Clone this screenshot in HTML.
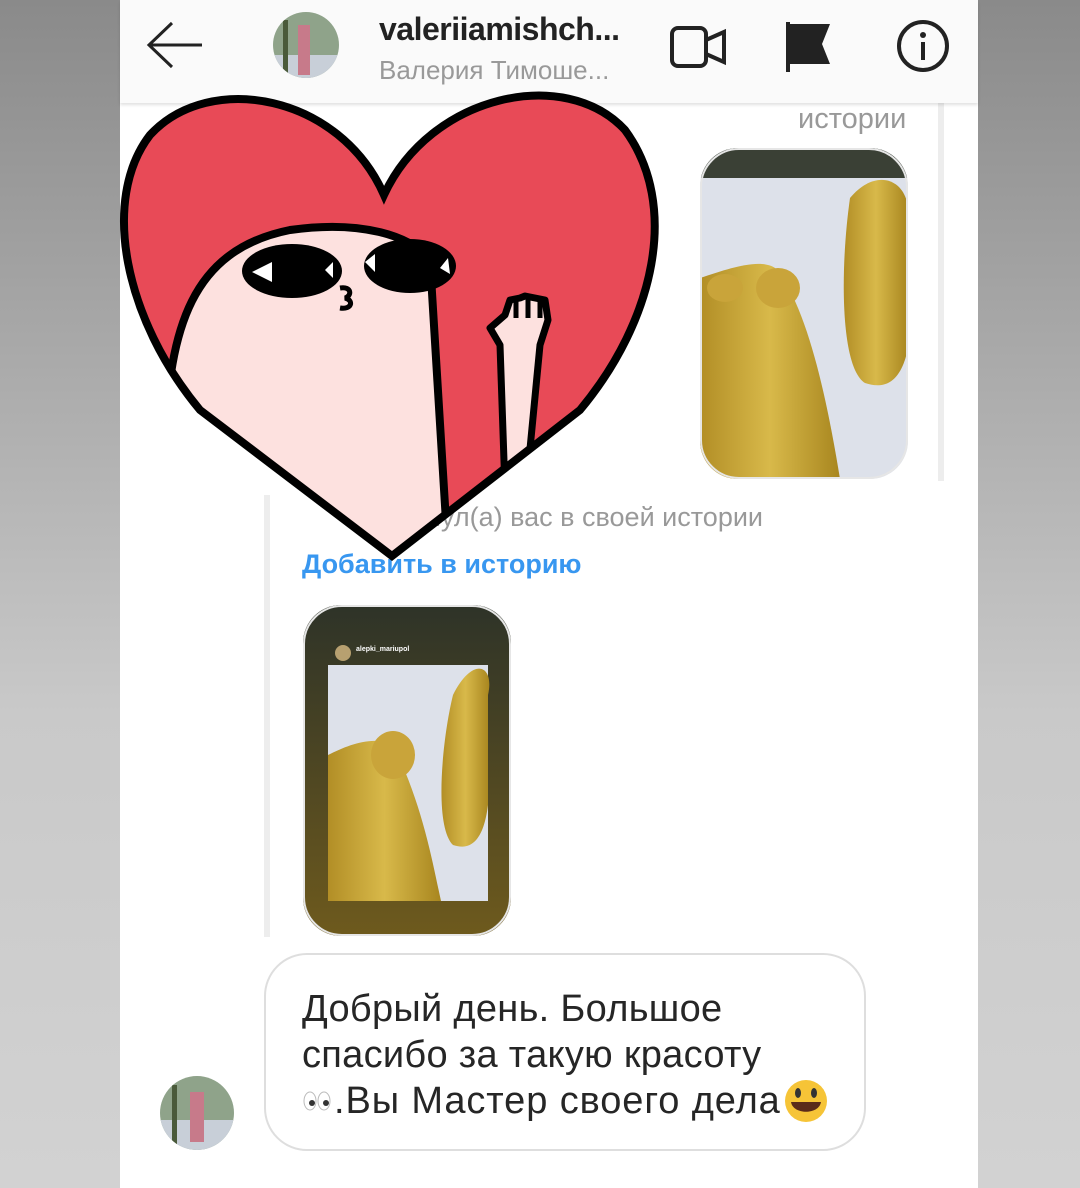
<!DOCTYPE html>
<html><head><meta charset="utf-8"><style>
*{margin:0;padding:0;box-sizing:border-box}
body{width:1080px;height:1188px;position:relative;overflow:hidden;background:linear-gradient(#8a8a8a,#c9c9c9 60%,#d2d2d2);font-family:"Liberation Sans",sans-serif}
.main{position:absolute;left:120px;top:0;width:858px;height:1188px;background:#fff}
.hdr{position:absolute;left:120px;top:0;width:858px;height:103px;background:#fafafa;box-shadow:0 2px 3px rgba(0,0,0,.12)}
.t{position:absolute;white-space:nowrap}
.vl{position:absolute;width:6px;background:#ededed}
</style></head><body>
<div class="main"></div>
<div class="vl" style="left:938px;top:103px;height:378px"></div>
<div class="vl" style="left:264px;top:495px;height:442px"></div>
<div class="hdr"></div>
<svg style="position:absolute;left:0;top:0" width="1080" height="103">
<path d="M202,45 H150 M172,23 L149,45 L172,67" stroke="#222" stroke-width="3" fill="none"/>
<defs><clipPath id="av"><circle cx="306" cy="45" r="33"/></clipPath><clipPath id="av2"><circle cx="197" cy="1113" r="37"/></clipPath></defs>
<g clip-path="url(#av)"><rect x="270" y="10" width="75" height="75" fill="#8fa38a"/><rect x="270" y="55" width="75" height="30" fill="#c8cfd8"/><rect x="298" y="25" width="12" height="50" fill="#c77a8a"/><rect x="283" y="20" width="5" height="60" fill="#4a5a3a"/></g>
<rect x="672" y="28" width="34" height="38" rx="6" fill="none" stroke="#222" stroke-width="4"/>
<path d="M706,40 L724,32 V62 L706,54" fill="none" stroke="#222" stroke-width="4"/>
<path d="M788,22 V72" stroke="#222" stroke-width="4"/>
<path d="M788,24 H830 L822,44 L830,64 H788Z" fill="#222"/>
<circle cx="923" cy="46" r="24" fill="none" stroke="#222" stroke-width="4"/>
<circle cx="923" cy="35" r="3" fill="#222"/><rect x="921" y="42" width="4" height="18" fill="#222"/>
</svg>
<div class="t" style="left:379px;top:11px;font-size:32px;font-weight:bold;color:#222;letter-spacing:-0.5px">valeriiamishch...</div>
<div class="t" style="left:379px;top:55px;font-size:26px;color:#999">Валерия Тимоше...</div>
<div class="t" style="left:798px;top:103px;font-size:29px;color:#999">истории</div>

<svg style="position:absolute;left:700px;top:148px" width="208" height="331">
<defs><clipPath id="c1"><rect width="208" height="331" rx="38"/></clipPath><linearGradient id="gg" x1="0" x2="1"><stop offset="0" stop-color="#b28e26"/><stop offset=".5" stop-color="#d8b94a"/><stop offset="1" stop-color="#a8861f"/></linearGradient></defs>
<g clip-path="url(#c1)"><rect width="208" height="331" fill="#dde1ea"/><rect width="208" height="30" fill="#3a4035"/>
<path d="M0,130 C30,120 60,110 75,120 C110,160 130,270 140,331 H0Z" fill="url(#gg)"/>
<ellipse cx="25" cy="140" rx="18" ry="14" fill="#c9a43a"/><ellipse cx="78" cy="140" rx="22" ry="20" fill="#c9a43a"/>
<path d="M150,50 C175,20 205,30 208,60 V200 C200,240 180,240 165,235 C140,220 140,120 150,50Z" fill="url(#gg)"/></g>
<rect x="1" y="1" width="206" height="329" rx="38" fill="none" stroke="#e6e6e6" stroke-width="2"/>
</svg>

<div class="t" style="right:317px;top:502px;font-size:27px;color:#999">Упомянул(а) вас в своей истории</div>
<div class="t" style="left:302px;top:549px;font-size:27px;font-weight:bold;color:#3897f0">Добавить в историю</div>

<svg style="position:absolute;left:303px;top:605px" width="208" height="331">
<defs><clipPath id="c2"><rect width="208" height="331" rx="38"/></clipPath><linearGradient id="fr" x1="0" y1="0" x2="0" y2="1"><stop offset="0" stop-color="#2e3328"/><stop offset="1" stop-color="#6e5a1d"/></linearGradient></defs>
<g clip-path="url(#c2)"><rect width="208" height="331" fill="url(#fr)"/>
<rect x="25" y="60" width="160" height="236" fill="#dde1ea"/>
<path d="M25,150 C45,140 70,130 90,140 C120,200 130,260 138,296 H25Z" fill="url(#gg)"/>
<ellipse cx="90" cy="150" rx="22" ry="24" fill="#c9a43a"/>
<path d="M150,90 C170,50 192,60 185,90 V200 C180,240 165,245 150,240 C130,220 140,130 150,90Z" fill="url(#gg)"/>
<circle cx="40" cy="48" r="8" fill="#b7a070"/></g>
<rect x="1" y="1" width="206" height="329" rx="38" fill="none" stroke="#e6e6e6" stroke-width="2"/>
</svg>
<div class="t" style="left:356px;top:646px;font-size:7px;font-weight:bold;color:#fff">alepki_mariupol</div>

<svg style="position:absolute;left:0;top:0" width="1080" height="620">
<defs><clipPath id="h"><path d="M384,195 C340,95 210,70 150,135 C100,200 125,320 200,410 L392,556 L580,410 C655,320 680,205 625,130 C565,65 430,95 384,195Z"/></clipPath></defs>
<path d="M384,195 C340,95 210,70 150,135 C100,200 125,320 200,410 L392,556 L580,410 C655,320 680,205 625,130 C565,65 430,95 384,195Z" fill="#e84a57"/>
<g clip-path="url(#h)">
<path d="M165,440 C170,330 190,250 290,230 C360,220 410,235 430,260 L452,620 L100,620Z" fill="#fde1df" stroke="#000" stroke-width="8"/>
<path d="M505,490 L500,345 L490,328 L505,315 L510,300 L520,298 L525,296 L535,298 L545,300 L548,320 L540,345 L527,480Z" fill="#fde1df" stroke="#000" stroke-width="7" stroke-linejoin="round"/>
<path d="M516,300 V318 M528,298 V318 M540,302 V318" stroke="#000" stroke-width="5"/>
</g>
<path d="M384,195 C340,95 210,70 150,135 C100,200 125,320 200,410 L392,556 L580,410 C655,320 680,205 625,130 C565,65 430,95 384,195Z" fill="none" stroke="#000" stroke-width="8"/>
<ellipse cx="292" cy="271" rx="50" ry="27" fill="#000"/>
<ellipse cx="410" cy="266" rx="46" ry="27" fill="#000"/>
<path d="M252,272 L272,262 L272,282Z M325,270 L333,262 L333,278Z M365,262 L375,254 L375,272Z M440,268 L448,258 L450,274Z" fill="#fff"/>
<path d="M340,288 C352,286 352,296 345,298 C354,300 352,310 340,308" fill="none" stroke="#000" stroke-width="5"/>
</svg>

<svg style="position:absolute;left:0;top:0" width="1080" height="1188">
<rect x="265" y="954" width="600" height="196" rx="42" fill="#fff" stroke="#dedede" stroke-width="2"/>
<g clip-path="url(#av2)"><rect x="158" y="1075" width="78" height="78" fill="#8fa38a"/><rect x="158" y="1120" width="78" height="35" fill="#c8cfd8"/><rect x="190" y="1092" width="14" height="50" fill="#c77a8a"/><rect x="172" y="1085" width="5" height="65" fill="#4a5a3a"/></g>
<circle cx="806" cy="1101" r="21" fill="#f6c437"/>
<ellipse cx="798" cy="1093" rx="3" ry="5" fill="#333"/><ellipse cx="814" cy="1093" rx="3" ry="5" fill="#333"/>
<path d="M791,1102 H821 C819,1115 793,1115 791,1102Z" fill="#5a2a1a"/>
<ellipse cx="310" cy="1101" rx="6" ry="9" fill="#fff" stroke="#bbb"/><ellipse cx="324" cy="1101" rx="6" ry="9" fill="#fff" stroke="#bbb"/>
<circle cx="312" cy="1103" r="3" fill="#333"/><circle cx="326" cy="1103" r="3" fill="#333"/>
</svg>
<div class="t" style="left:302px;top:986px;font-size:38px;line-height:46px;color:#262626;letter-spacing:0.3px">Добрый день. Большое<br>спасибо за такую красоту<br><span style="display:inline-block;width:32px"></span><span style="letter-spacing:0.9px">.Вы Мастер своего дела</span></div>
</body></html>
